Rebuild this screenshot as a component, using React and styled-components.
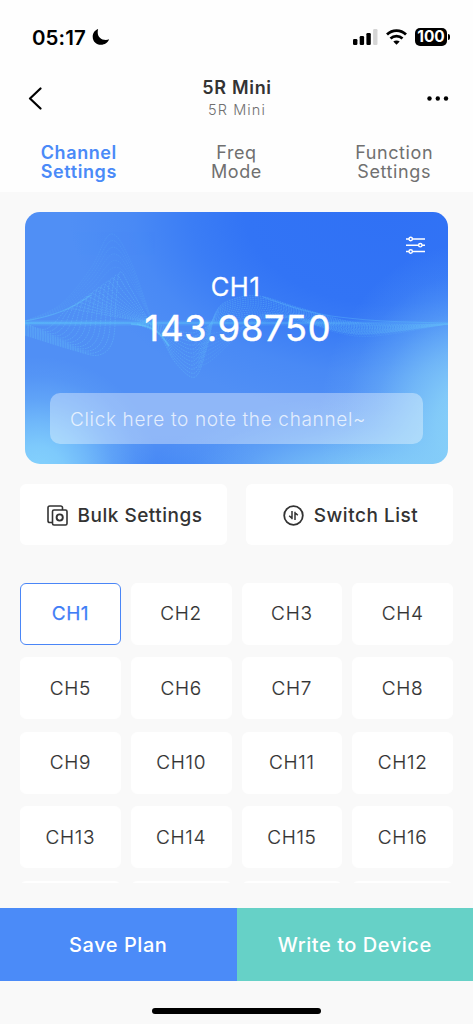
import React from "react";
import styled, { createGlobalStyle } from "styled-components";

const GlobalStyle = createGlobalStyle`
  * { box-sizing: border-box; }
  body { margin: 0; background: #f9f9f9; }
  button { border: 0; padding: 0; margin: 0; background: none; font: inherit; color: inherit; }
`;

const Screen = styled.div`
  width: 473px;
  height: 1024px;
  overflow: hidden;
  display: flex;
  flex-direction: column;
  background: #f9f9f9;
  color: #333;
  font-family: Inter, "Liberation Sans", sans-serif;
`;

const Header = styled.header`
  height: 192px;
  flex: none;
  background: #fefefe;
`;

const StatusBar = styled.div`
  height: 74px;
  padding: 0 23px 0 32px;
  display: flex;
  align-items: center;
  justify-content: space-between;
`;

const Clock = styled.div`
  display: flex;
  align-items: center;
  gap: 6px;
  color: #000;
  font-size: 20.5px;
  font-weight: 600;
  letter-spacing: 0.1px;
`;

const StatusIcons = styled.div`
  display: flex;
  align-items: center;
  gap: 8px;
`;

const Battery = styled.div`
  display: flex;
  align-items: center;
  gap: 1px;
  &::after {
    content: "";
    width: 2px;
    height: 6px;
    border-radius: 0 3px 3px 0;
    background: #000;
  }
`;

const BatteryBody = styled.div`
  width: 32px;
  height: 18px;
  border-radius: 5px;
  background: #000;
  color: #fff;
  font-size: 15.5px;
  font-weight: 700;
  line-height: 18px;
  text-align: center;
`;

const NavBar = styled.div`
  height: 50px;
  padding: 0 24px 0 28px;
  display: grid;
  grid-template-columns: 40px 1fr 40px;
  align-items: center;
`;

const NavButton = styled.button`
  display: flex;
  margin-top: -2px;
  justify-content: ${(p) => (p.$end ? "flex-end" : "flex-start")};
`;

const Titles = styled.div`
  display: flex;
  flex-direction: column;
  align-items: center;
  padding: 0 3px 2px 0;
`;

const Title = styled.h1`
  margin: 0;
  font-size: 18px;
  font-weight: 600;
  line-height: 24px;
  letter-spacing: 0.7px;
`;

const Subtitle = styled.div`
  font-size: 14.5px;
  font-weight: 350;
  line-height: 20px;
  letter-spacing: 1.1px;
  color: #707070;
`;

const Tabs = styled.nav`
  display: grid;
  grid-template-columns: repeat(3, 1fr);
  padding-top: 19px;
`;

const Tab = styled.button`
  font-size: 18px;
  line-height: 19px;
  text-align: center;
  font-weight: ${(p) => (p.$active ? 600 : 400)};
  letter-spacing: ${(p) => (p.$active ? "0.6px" : "0.6px")};
  color: ${(p) => (p.$active ? "#4a8af8" : "#707070")};
`;

const fade = (rgb) =>
  `rgba(${rgb}, 1) 0%, rgba(${rgb}, 0.88) 22%, rgba(${rgb}, 0.62) 42%, rgba(${rgb}, 0.3) 63%, rgba(${rgb}, 0.09) 83%, rgba(${rgb}, 0) 100%`;

const Card = styled.section`
  position: relative;
  width: 423px;
  height: 252px;
  flex: none;
  margin: 20px 0 0 25px;
  border-radius: 15px;
  overflow: hidden;
  display: flex;
  flex-direction: column;
  align-items: center;
  color: #fff;
  background:
    radial-gradient(ellipse 120px 115px at 3% 103%, ${fade("132, 210, 253")}),
    radial-gradient(ellipse 150px 180px at 105% 84%, ${fade("136, 209, 249")}),
    radial-gradient(ellipse 240px 90px at 85% 108%, ${fade("128, 202, 248")}),
    radial-gradient(ellipse 120px 55px at 36% 110%, ${fade("62, 130, 245")}),
    radial-gradient(ellipse 320px 205px at 86% 0%, rgb(48, 113, 245) 0%, rgb(50, 116, 245) 45%, rgba(52, 119, 245, 0.75) 62%, rgba(60, 127, 245, 0.35) 80%, rgba(70, 136, 245, 0) 100%),
    #508ff5;
`;

const Waves = styled.svg`
  position: absolute;
  inset: 0;
`;

const CardSettings = styled.button`
  position: relative;
  align-self: flex-end;
  display: flex;
  margin: 24px 22px 0 0;
`;

const ChannelName = styled.div`
  position: relative;
  margin: 17px 2px 0 0;
  font-size: 25.5px;
  font-weight: 400;
  line-height: 32px;
  letter-spacing: 0.6px;
  -webkit-text-stroke: 0.3px currentColor;
`;

const Frequency = styled.div`
  position: relative;
  margin-left: 3px;
  font-size: 36px;
  font-weight: 400;
  line-height: 50px;
  letter-spacing: 0.9px;
  -webkit-text-stroke: 0.5px currentColor;
`;

const Note = styled.div`
  position: relative;
  width: 373px;
  height: 51px;
  margin-top: 40px;
  padding-left: 20px;
  border-radius: 10px;
  background: rgba(255, 255, 255, 0.36);
  color: rgba(255, 255, 255, 0.75);
  font-size: 19px;
  font-weight: 300;
  line-height: 54px;
  letter-spacing: 0.65px;
  white-space: nowrap;
`;

const Actions = styled.div`
  display: grid;
  grid-template-columns: 1fr 1fr;
  gap: 19px;
  flex: none;
  height: 61px;
  margin: 20px 20px 0;
`;

const ActionButton = styled.button`
  display: flex;
  align-items: center;
  justify-content: center;
  gap: 10px;
  padding: 1px 0 0 2px;
  border-radius: 6px;
  background: #fff;
  font-size: 19px;
  font-weight: 500;
  letter-spacing: 0.5px;
`;

const ChannelGrid = styled.div`
  display: grid;
  grid-template-columns: repeat(4, 1fr);
  grid-auto-rows: 62px;
  gap: 12.5px 10px;
  flex: none;
  height: 300.5px;
  margin: 37.5px 20px 0;
  overflow: hidden;
`;

const Channel = styled.button`
  border-radius: 6px;
  border: 1.5px solid ${(p) => (p.$active ? "#4a86f7" : "#fff")};
  background: #fff;
  font-size: 19px;
  font-weight: ${(p) => (p.$active ? 400 : 300)};
  letter-spacing: ${(p) => (p.$active ? "0.5px" : "0.7px")};
  -webkit-text-stroke: ${(p) => (p.$active ? "0.25px" : "0.15px")} currentColor;
  color: ${(p) => (p.$active ? "#3f7df6" : "#333")};
`;

const Footer = styled.footer`
  display: grid;
  grid-template-columns: 1fr 1fr;
  flex: none;
  height: 73px;
  margin-top: 25px;
`;

const FooterButton = styled.button`
  background: ${(p) => p.$color};
  color: #fff;
  font-size: 20px;
  font-weight: 500;
  letter-spacing: 0.55px;
`;

const HomeIndicator = styled.div`
  width: 169px;
  height: 6px;
  flex: none;
  margin: 27px auto 0;
  border-radius: 3px;
  background: #000;
`;

const smooth = (pts) => {
  let d = `M${pts[0][0]} ${pts[0][1]}`;
  for (let i = 0; i < pts.length - 1; i++) {
    const a = pts[Math.max(i - 1, 0)];
    const b = pts[i];
    const c = pts[i + 1];
    const e = pts[Math.min(i + 2, pts.length - 1)];
    d += `C${b[0] + (c[0] - a[0]) / 6} ${b[1] + (c[1] - a[1]) / 6} ${c[0] - (e[0] - b[0]) / 6} ${c[1] - (e[1] - b[1]) / 6} ${c[0]} ${c[1]}`;
  }
  return d;
};

const family = (count, points) =>
  Array.from({ length: count }, (_, i) => smooth(points((i + 1) / count)));

// Left packet: each strand dips under the beam, climbs to a crest and falls back to it.
const leftStrands = family(13, (t) => [
  [0, 110 + 13 * t],
  [8 + 40 * t, 114 + 24 * t],
  [16 + 58 * t, 115 + 28 * t],
  [24 + 64 * t, 110 + 18 * t],
  [32 + 59 * t, 104 - 16 * t],
  [40 + 55 * t, 100 - 40 * t],
  [62 + 44 * t, 102 - 25 * t],
  [126, 111 + t * 2],
]);

const crestStrands = family(6, (t) => [
  [0, 109],
  [36, 100 - 8 * t],
  [66, 82 - 26 * t],
  [90 - 4 * t, 62 - 40 * t],
  [106, 74 - 24 * t],
  [128, 112],
]);

// Right packet: a trough under the figures, then a crest with a long tail.
const rightStrands = family(12, (t) => [
  [112, 112],
  [134, 112 + 11 * t],
  [150, 115 + 35 * t],
  [166 + 4 * t, 117 + 48 * t],
  [178 + 4 * t, 115 + 20 * t],
  [188 + 3 * t, 112 - 12 * t],
  [206, 110 - 22 * t],
  [234, 108 - 24 * t],
  [275, 110 - 14 * t],
  [335, 111 + 12 * (1 - t)],
  [423, 112],
]);

const innerStrands = family(8, (t) => [
  [168, 120 + 36 * t],
  [184, 118 + 32 * t],
  [206, 116 + 14 * t],
  [232, 112 - 8 * t],
  [264, 106 - 2 * t],
  [310, 110 + 10 * t],
  [350, 112 + 12 * t],
  [423, 112],
]);

const Strands = ({ paths, opacity }) => (
  <g stroke="#69cafb" strokeWidth="0.8" strokeDasharray="1.7 0.9" opacity={opacity}>
    {paths.map((d, i) => <path key={i} d={d} />)}
  </g>
);

const WaveArt = () => (
  <Waves width="423" height="252" viewBox="0 0 423 252" fill="none">
    <defs>
      <linearGradient id="beam" x1="0" x2="423" y1="0" y2="0" gradientUnits="userSpaceOnUse">
        <stop offset="0" stopColor="#5cc6fa" stopOpacity="0.9" />
        <stop offset="0.5" stopColor="#5cc2fa" stopOpacity="0.7" />
        <stop offset="1" stopColor="#5cb4fa" stopOpacity="0.3" />
      </linearGradient>
    </defs>
    <Strands paths={leftStrands} opacity="0.42" />
    <Strands paths={crestStrands} opacity="0.16" />
    <Strands paths={rightStrands} opacity="0.4" />
    <Strands paths={innerStrands} opacity="0.22" />
    <rect x="0" y="108.5" width="423" height="5" fill="url(#beam)" opacity="0.3" />
    <rect x="0" y="110" width="423" height="2" fill="url(#beam)" opacity="0.5" />
    <path d="M0 109C30 104 48 96 66 83" stroke="#62c8fa" strokeWidth="1.2" opacity="0.45" />
    <path d="M106 112C130 113 136 122 144 134" stroke="#62c8fa" strokeWidth="1.6" opacity="0.6" />
    <path d="M238 85C282 100 296 109 423 111" stroke="#5cb8fa" strokeWidth="1.2" opacity="0.4" />
  </Waves>
);

const Moon = () => (
  <svg width="18" height="18" viewBox="0 0 18 18">
    <path d="M6.1 1C2.9 2.1.7 5 .7 8.700c0 4.700 3.600 8.100 8.200 8.100 3.900 0 7-2.200 8.200-5.500-1 .5-2.100.7-3.300.7-4.800 0-8.100-3.100-8.100-7.700 0-1.100.1-2.200.4-3.300z" fill="#000" />
  </svg>
);

const Signal = () => (
  <svg width="25" height="16" viewBox="0 0 25 16">
    <rect x="0" y="10" width="4.4" height="6" rx="1.2" />
    <rect x="6.7" y="7" width="4.4" height="9" rx="1.2" />
    <rect x="13.4" y="4" width="4.4" height="12" rx="1.2" />
    <rect x="20.1" y="0" width="4.4" height="16" rx="1.2" fill="#d5d5d5" />
  </svg>
);

const Wifi = () => (
  <svg width="21" height="16" viewBox="0 0 21 16" fill="none" stroke="#000" strokeWidth="2.7">
    <path d="M1 5.5C6.3.2 14.7.2 20 5.5" />
    <path d="M4.5 9.5C7.8 6.4 13.2 6.4 16.5 9.5" />
    <path d="M10.5 15.8L7.3 12.6C9 11 12 11 13.7 12.6Z" fill="#000" stroke="none" />
  </svg>
);

const Back = () => (
  <svg width="14" height="23" viewBox="0 0 14 23" fill="none" stroke="#000" strokeWidth="2.2" strokeLinecap="round" strokeLinejoin="round">
    <path d="M12.5 1.5L2 11.5L12.5 21.5" />
  </svg>
);

const More = () => (
  <svg width="22" height="5" viewBox="0 0 22 5">
    <circle cx="2.5" cy="2.5" r="2.2" />
    <circle cx="10.8" cy="2.5" r="2.2" />
    <circle cx="19" cy="2.5" r="2.2" />
  </svg>
);

const Sliders = () => (
  <svg width="21" height="18" viewBox="0 0 21 18" fill="none" stroke="#fff" strokeWidth="1.4">
    <path d="M1 3H4M7.5 3H20M1 9.2H13.5M17 9.2H20M1 15.5H4M7.5 15.5H20" />
    <circle cx="5.7" cy="3" r="1.7" />
    <circle cx="15.3" cy="9.2" r="1.7" />
    <circle cx="5.7" cy="15.5" r="1.7" />
  </svg>
);

const BulkIcon = () => (
  <svg width="21" height="21" viewBox="0 0 21 21" fill="none" stroke="#333" strokeWidth="1.6">
    <path d="M5 17.5H2.8A1.8 1.8 0 0 1 1 15.7V2.8A1.8 1.8 0 0 1 2.8 1H13.7A1.8 1.8 0 0 1 15.5 2.8V5" />
    <rect x="5.5" y="5" width="14.5" height="15" rx="1.5" />
    <circle cx="12.7" cy="12.5" r="3.1" strokeWidth="1.9" />
  </svg>
);

const SwitchIcon = () => (
  <svg width="21" height="21" viewBox="0 0 21 21" fill="none" stroke="#333" strokeWidth="1.8">
    <circle cx="10.5" cy="10.5" r="9.3" />
    <path d="M9 6V14.2M9.3 13.6L6.2 10.8M12 15V6.8M11.7 7.4L14.8 10.2" strokeWidth="1.5" />
  </svg>
);

const channels = Array.from({ length: 16 }, (_, i) => `CH${i + 1}`);
const peekingRow = [17, 18, 19, 20];

export default function App() {
  return (
    <Screen>
      <GlobalStyle />
      <Header>
        <StatusBar>
          <Clock>05:17<Moon /></Clock>
          <StatusIcons>
            <Signal />
            <Wifi />
            <Battery><BatteryBody>100</BatteryBody></Battery>
          </StatusIcons>
        </StatusBar>
        <NavBar>
          <NavButton aria-label="Back"><Back /></NavButton>
          <Titles>
            <Title>5R Mini</Title>
            <Subtitle>5R Mini</Subtitle>
          </Titles>
          <NavButton $end aria-label="More"><More /></NavButton>
        </NavBar>
        <Tabs>
          <Tab $active>Channel<br />Settings</Tab>
          <Tab>Freq<br />Mode</Tab>
          <Tab>Function<br />Settings</Tab>
        </Tabs>
      </Header>
      <Card>
        <WaveArt />
        <CardSettings aria-label="Channel options"><Sliders /></CardSettings>
        <ChannelName>CH1</ChannelName>
        <Frequency>143.98750</Frequency>
        <Note>Click here to note the channel~</Note>
      </Card>
      <Actions>
        <ActionButton><BulkIcon />Bulk Settings</ActionButton>
        <ActionButton><SwitchIcon />Switch List</ActionButton>
      </Actions>
      <ChannelGrid>
        {channels.map((name, i) => (
          <Channel key={name} $active={i === 0}>{name}</Channel>
        ))}
        {peekingRow.map((n) => <Channel key={n} />)}
      </ChannelGrid>
      <Footer>
        <FooterButton $color="#4b8bf8">Save Plan</FooterButton>
        <FooterButton $color="#66d1c7">Write to Device</FooterButton>
      </Footer>
      <HomeIndicator />
    </Screen>
  );
}
